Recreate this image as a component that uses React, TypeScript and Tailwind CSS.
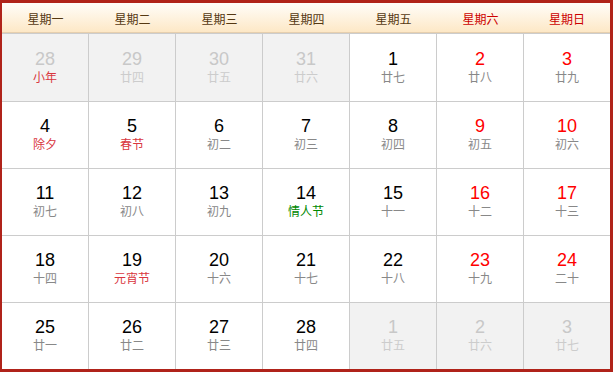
import React from "react";

type Day = { n: number; l: string; out?: boolean; fest?: "red" | "green" };

const weeks: Day[][] = [
  [
    { n: 28, l: "小年", out: true, fest: "red" },
    { n: 29, l: "廿四", out: true },
    { n: 30, l: "廿五", out: true },
    { n: 31, l: "廿六", out: true },
    { n: 1, l: "廿七" },
    { n: 2, l: "廿八" },
    { n: 3, l: "廿九" },
  ],
  [
    { n: 4, l: "除夕", fest: "red" },
    { n: 5, l: "春节", fest: "red" },
    { n: 6, l: "初二" },
    { n: 7, l: "初三" },
    { n: 8, l: "初四" },
    { n: 9, l: "初五" },
    { n: 10, l: "初六" },
  ],
  [
    { n: 11, l: "初七" },
    { n: 12, l: "初八" },
    { n: 13, l: "初九" },
    { n: 14, l: "情人节", fest: "green" },
    { n: 15, l: "十一" },
    { n: 16, l: "十二" },
    { n: 17, l: "十三" },
  ],
  [
    { n: 18, l: "十四" },
    { n: 19, l: "元宵节", fest: "red" },
    { n: 20, l: "十六" },
    { n: 21, l: "十七" },
    { n: 22, l: "十八" },
    { n: 23, l: "十九" },
    { n: 24, l: "二十" },
  ],
  [
    { n: 25, l: "廿一" },
    { n: 26, l: "廿二" },
    { n: 27, l: "廿三" },
    { n: 28, l: "廿四" },
    { n: 1, l: "廿五", out: true },
    { n: 2, l: "廿六", out: true },
    { n: 3, l: "廿七", out: true },
  ],
];

const heads = ["星期一", "星期二", "星期三", "星期四", "星期五", "星期六", "星期日"];

export default function App() {
  return (
    <div
      className="w-[613px] h-[372px] border-[#b0231a] border-l-[2px] border-r-[3px] border-t-[3px] border-b-[3px] bg-white flex flex-col"
      style={{ fontFamily: '"Liberation Sans", "Noto Sans CJK SC", sans-serif' }}
    >
      <div className="h-[30px] grid grid-cols-[repeat(6,87px)_1fr] bg-gradient-to-b from-[#fffdf9] to-[#fde8c6] border-b border-[#e6cfae]">
        {heads.map((h, i) => (
          <div
            key={h}
            className={`flex items-center justify-center pt-[2px] text-[12px] ${i >= 5 ? "text-[#cc0000]" : "text-[#553812]"}`}
            style={{ fontFamily: '"Noto Sans CJK SC", sans-serif' }}
          >
            {h}
          </div>
        ))}
      </div>
      {weeks.map((w, ri) => (
        <div
          key={ri}
          className={`grid grid-cols-[repeat(6,87px)_1fr] border-t border-[#cccccc] ${ri === 0 ? "h-[68px]" : "h-[67px]"}`}
        >
          {w.map((d, ci) => {
            const numColor = d.out
              ? "text-[#c8c8c8]"
              : ci >= 5
              ? "text-[#ff0000]"
              : "text-black";
            const lunColor =
              d.fest === "red"
                ? "text-[#d9363e]"
                : d.fest === "green"
                ? "text-[#008800]"
                : d.out
                ? "text-[#cccccc]"
                : "text-[#888888]";
            return (
              <div
                key={ci}
                className={`flex flex-col items-center justify-center ${ci < 6 ? "border-r border-[#cccccc]" : ""} ${d.out ? "bg-[#f2f2f2]" : "bg-white"}`}
              >
                <div className={`text-[18px] leading-[18px] ${numColor}`}>{d.n}</div>
                <div
                  className={`text-[12px] leading-[18px] ${lunColor}`}
                  style={{ fontFamily: '"Noto Sans CJK SC", sans-serif' }}
                >
                  {d.l}
                </div>
              </div>
            );
          })}
        </div>
      ))}
    </div>
  );
}
